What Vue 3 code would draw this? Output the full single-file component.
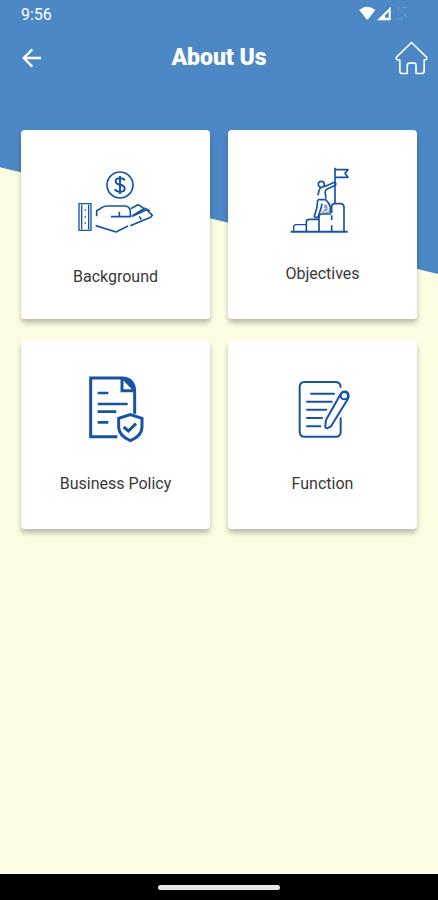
<script setup>
const time = '9:56'
const title = 'About Us'
const tiles = [
  { id: 'background', label: 'Background' },
  { id: 'objectives', label: 'Objectives' },
  { id: 'policy', label: 'Business Policy' },
  { id: 'function', label: 'Function' },
]
</script>

<template>
  <div class="screen">
    <div class="status">
      <span>{{ time }}</span>
      <svg class="signals" viewBox="0 0 150 48" aria-hidden="true">
        <path d="M1 12 Q24 -7 49 12 L28 39 Q25 42 22 39 Z" fill="#fff" />
        <path d="M54 43 L95 2 V43 Z" fill="#fff" />
        <path d="M78 35 V28 L89 17 V35 Z" fill="#4c88c6" />
        <path d="M119 3 V15 M130 5 H143 M119 40 H129 V31 M139 22 V34" class="faint" />
      </svg>
    </div>

    <header class="bar">
      <button class="icon-button" type="button" aria-label="Back">
        <svg class="arrow" viewBox="0 0 60 60" aria-hidden="true">
          <path d="M57 30 H6 M31 4 L5 30 L31 56" />
        </svg>
      </button>
      <h1>{{ title }}</h1>
      <a class="home" href="#home" aria-label="Home">
        <svg viewBox="0 0 102 102" aria-hidden="true">
          <path d="M51 3 L98 49 Q100 57 91 57 H90 V91 Q90 99 82 99 H65 V73 Q65 67 59 67 H45 Q38 67 38 74 V99 H22 Q15 99 15 91 V57 H11 Q2 57 4 49 Z" />
        </svg>
      </a>
    </header>

    <main class="grid">
      <a v-for="tile in tiles" :key="tile.id" class="tile" :href="'#' + tile.id">
        <svg v-if="tile.id === 'background'" class="art wide" viewBox="2 0 300 279" aria-hidden="true">
          <circle cx="164" cy="90" r="39" />
          <path d="M178 76 Q176 70 164 70 Q151 70 151 79 Q151 87 164 89 Q178 91 178 101 Q178 110 164 110 Q151 110 149 102 M164 63 V117" class="bold" />
          <path d="M41 146 H77 V226 H41 Z M49 149 V223 M70 149 V223" class="thin" />
          <path d="M58 165 h3 M58 185 h3 M58 204 h3" class="bold" />
          <path d="M94 184 V167 L102 163 Q113 153 125 153 H181 Q194 155 195 171 V185 H137 M162 183 V170" />
          <path d="M196 161 L218 149 Q224 151 235 160 M199 184 L238 160 L253 167 M201 184 L244 164 L261 181 L256 187 L195 212 M222 184 L228 194 M91 212 L152 231 L188 213" />
        </svg>

        <svg v-else-if="tile.id === 'objectives'" class="art" viewBox="10 0 240 270" aria-hidden="true">
          <path d="M33 230 H204" class="bold" />
          <path d="M166 38 V145 M168 44 H205 L196 55 L205 67 H168" />
          <circle cx="125" cy="88" r="9" />
          <path d="M134 95 L164 82 Q171 83 167 91 L141 103 Q135 107 137 116 L139 130 M122 98 Q116 108 115 121 M114 134 H139 M114 135 L112 157 L103 187 M127 146 L124 160 L115 187 H104 M138 134 Q148 143 152 156 V174" />
          <path d="M134 148 L142 158 L128 174 M133 158 L143 151 M129 170 L147 162 M134 176 L150 169" class="thin pale" />
          <path d="M42 229 V216 Q42 209 49 209 H79" class="thin" />
          <path d="M80 229 V202 Q80 193 89 193 H118 M118 229 V186 Q118 177 126 177 H154 M156 181 V195 M156 211 V229 M156 174 V155 Q156 146 165 146 H182 Q193 146 193 157 V229" />
        </svg>

        <svg v-else-if="tile.id === 'policy'" class="art strong" viewBox="2 0 240 270" aria-hidden="true">
          <path d="M126 215 H46 V39 H143 Q178 43 178 81 V146" />
          <path d="M140 41 V77 H174" />
          <path d="M140 41 Q176 42 176 79 Z" class="fold" />
          <path d="M67 84 H99 M67 117 H157 M67 140 H123 M67 172 H99" class="line" />
          <path d="M165 149 L200 160 V188 Q199 213 165 227 Q132 213 130 188 V160 Z" />
          <path d="M145 186 L159 198 L182 176" />
        </svg>

        <svg v-else class="art medium" viewBox="-5 0 240 270" aria-hidden="true">
          <path d="M168 66 Q167 51 151 51 H60 Q45 51 45 66 V200 Q45 215 60 215 H153 Q168 215 168 200 V160" />
          <path d="M79 86 H148 M67 110 H141 M67 134 H125 M67 159 H112 M67 184 H107" />
          <path d="M165 92 Q172 76 186 80 Q196 88 190 101 L139 184 L127 190 Q121 190 122 182 L124 165 Z" />
          <circle cx="179" cy="92" r="11" />
        </svg>

        <span>{{ tile.label }}</span>
      </a>
    </main>

    <footer class="system"><span class="pill"></span></footer>
  </div>
</template>

<style>
body {
  margin: 0;
}
</style>

<style scoped>
.screen {
  position: relative;
  isolation: isolate;
  display: flex;
  flex-direction: column;
  min-height: 100vh;
  background: #fefbe3;
  font-family: Roboto, "Liberation Sans", sans-serif;
}

.screen::before {
  content: "";
  position: absolute;
  z-index: -1;
  top: 0;
  left: 0;
  right: 0;
  height: 274px;
  background: #4c88c6;
  clip-path: polygon(0 0, 100% 0, 100% 100%, 0 61%);
}

.status {
  display: flex;
  align-items: center;
  justify-content: space-between;
  height: 28px;
  padding: 0 29px 0 21px;
  color: #fff;
  font-size: 16px;
}

.signals {
  width: 50px;
  height: 16px;
}

.faint {
  fill: none;
  stroke: #6da0d6;
  stroke-width: 3;
}

.bar {
  display: grid;
  grid-template-columns: 1fr auto 1fr;
  align-items: center;
  height: 60px;
  padding: 0 10px;
  color: #fff;
}

.icon-button {
  display: flex;
  justify-self: start;
  padding: 12px;
  border: 0;
  background: none;
}

.arrow {
  width: 20px;
  height: 20px;
  fill: none;
  stroke: #fff;
  stroke-width: 7;
}

h1 {
  margin: 0;
  font-size: 23px;
  font-weight: 900;
  line-height: 28px;
}

.home {
  display: flex;
  justify-self: end;
}

.home svg {
  width: 33px;
  height: 34px;
  fill: none;
  stroke: #fff;
  stroke-width: 5;
  stroke-linejoin: round;
}

.grid {
  display: grid;
  grid-template-columns: 1fr 1fr;
  gap: 21px 18px;
  padding: 42px 21px;
}

.tile {
  display: flex;
  flex-direction: column;
  align-items: center;
  gap: 18px;
  box-sizing: border-box;
  aspect-ratio: 1;
  padding-top: 25px;
  border-radius: 4px;
  background: #fff;
  box-shadow: 0 4px 5px rgba(0, 0, 0, 0.25);
  color: #383838;
  font-size: 16px;
  line-height: 21px;
  text-decoration: none;
}

.art {
  width: 80px;
  height: 90px;
  fill: none;
  stroke: #1653a5;
  stroke-width: 5;
  stroke-linejoin: round;
}

.wide {
  width: 100px;
  height: 93px;
}

.strong {
  stroke-width: 9;
  stroke-linejoin: miter;
}

.medium {
  stroke-width: 6;
  stroke-linecap: round;
}

.bold {
  stroke-width: 6;
}

.line {
  stroke-width: 8;
}

.thin {
  stroke-width: 4;
}

.pale {
  stroke: #7f93b8;
}

.fold {
  fill: #1653a5;
  stroke-width: 2;
}

.system {
  display: flex;
  align-items: center;
  justify-content: center;
  height: 26px;
  margin-top: auto;
  background: #000;
}

.pill {
  width: 122px;
  height: 5px;
  border-radius: 3px;
  background: #e8e8e8;
}
</style>
